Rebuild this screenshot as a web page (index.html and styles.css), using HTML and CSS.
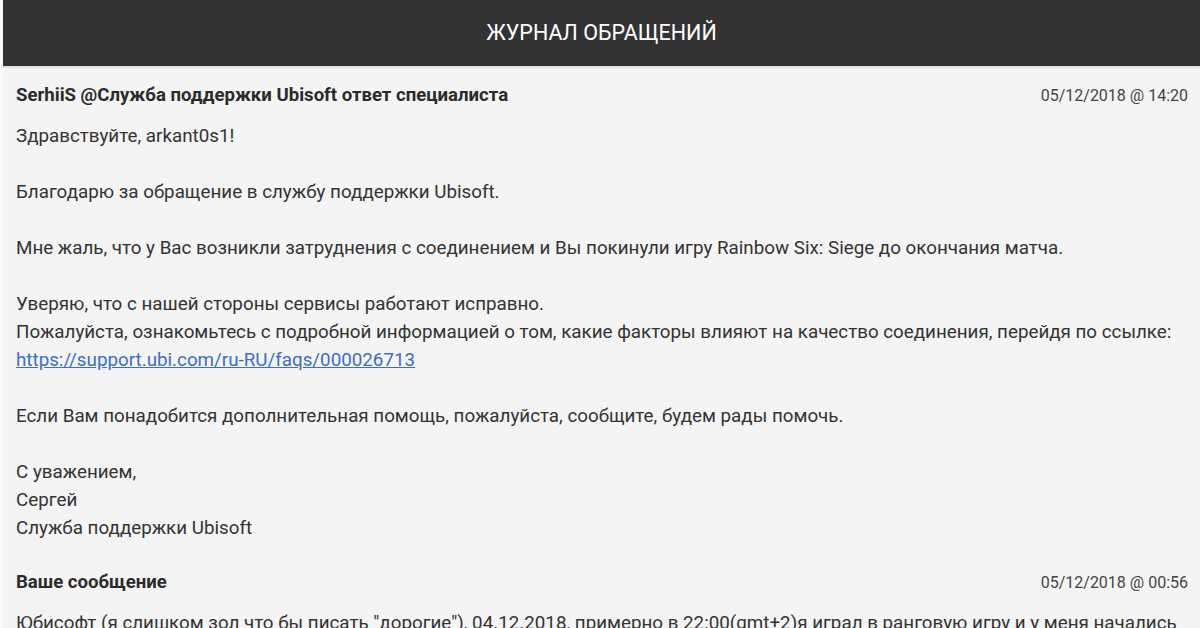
FILE: index.html
```html
<!DOCTYPE html>
<html lang="ru">
<head>
<meta charset="utf-8"/>
<meta content="width=device-width, initial-scale=1.0" name="viewport"/>
<title>Журнал обращений</title>
<link rel="stylesheet" href="styles.css">
</head>
<body>
<div class="journal">
<div class="journal-head">Журнал обращений</div>
<div class="entries">
<div class="entry">
<div class="entry-top">
<span class="author">SerhiiS @Служба поддержки Ubisoft ответ специалиста</span>
<span class="date">05/12/2018 @ 14:20</span>
</div>
<div class="entry-text">
Здравствуйте, arkant0s1!<br><br>
Благодарю за обращение в службу поддержки Ubisoft.<br><br>
Мне жаль, что у Вас возникли затруднения с соединением и Вы покинули игру Rainbow Six: Siege до окончания матча.<br><br>
Уверяю, что с нашей стороны сервисы работают исправно.<br>
Пожалуйста, ознакомьтесь с подробной информацией о том, какие факторы влияют на качество соединения, перейдя по ссылке:<br>
<a href="#">https://support.ubi.com/ru-RU/faqs/000026713</a><br><br>
Если Вам понадобится дополнительная помощь, пожалуйста, сообщите, будем рады помочь.<br><br>
С уважением,<br>
Сергей<br>
Служба поддержки Ubisoft
</div>
</div>
<div class="entry">
<div class="entry-top">
<span class="author">Ваше сообщение</span>
<span class="date">05/12/2018 @ 00:56</span>
</div>
<div class="entry-text">
Юбисофт (я слишком зол что бы писать "дорогие"), 04.12.2018, примерно в 22:00(gmt+2)я играл в ранговую игру и у меня начались проблемы с соединением.
</div>
</div>
</div>
</div>
</body>
</html>
```

FILE: styles.css
```css
body {
  margin: 0;
  background: #fafafa;
  font-family: Roboto, 'Noto Sans', sans-serif;
  color: #333;
  overflow: hidden;
}
.journal {
  margin-left: 3px;
}
.journal-head {
  height: 66px;
  line-height: 66px;
  background: #333;
  color: #fff;
  text-align: center;
  text-transform: uppercase;
  font-size: 21.5px;
  border-bottom: 2px solid #e4e4e4;
}
.entries {
  background: #f4f4f4;
  padding: 13px 12px 0 13px;
}
.entry {
  margin-bottom: 26px;
}
.entry-top {
  display: flex;
  justify-content: space-between;
  align-items: baseline;
  line-height: 28px;
  margin-bottom: 12px;
}
.author {
  font-size: 18.6px;
  font-weight: bold;
  color: #2b2b2b;
}
.date {
  font-size: 16px;
  color: #444;
}
.entry-text {
  font-size: 18.8px;
  line-height: 28px;
}
.entry-text a {
  color: #3a6fc4;
}
```
